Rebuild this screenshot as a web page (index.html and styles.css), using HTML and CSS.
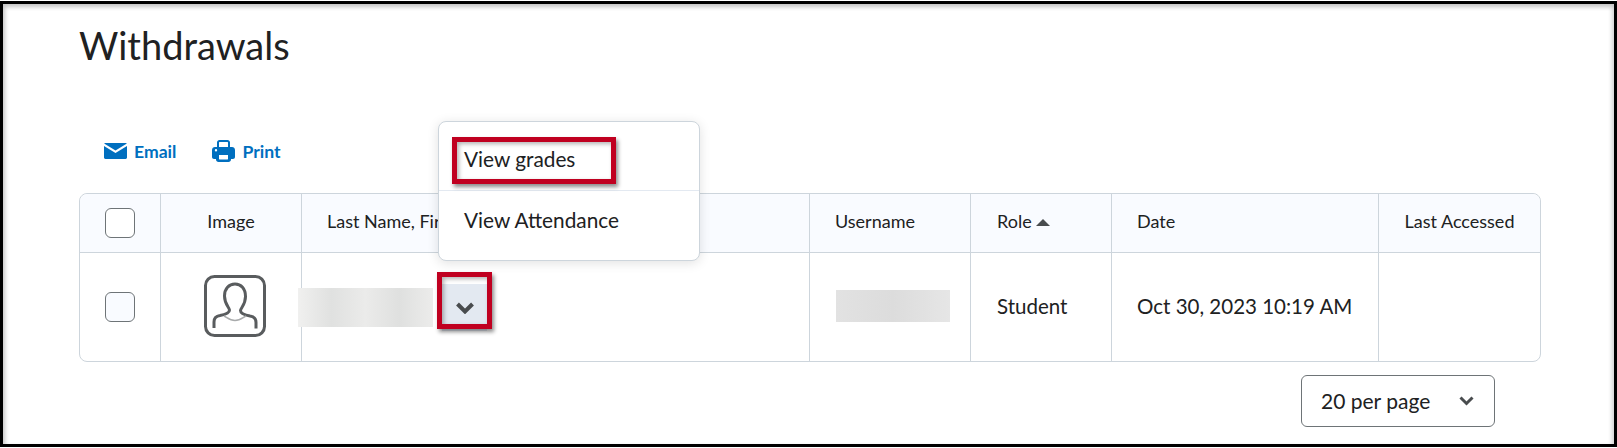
FILE: index.html
```html
<!DOCTYPE html>
<html lang="en">
<head>
<meta charset="utf-8">
<title>Withdrawals</title>
<link rel="stylesheet" href="styles.css">
</head>
<body>
<main class="frame">
  <h1 class="title">Withdrawals</h1>
  <div class="actions">
    <a class="action action-email">
      <svg class="icon-mail" viewBox="0 0 23 16" aria-hidden="true"><path d="M1.2 0h20.6c.5 0 .9.2 1.1.5L11.500 7.600.1.500C.3.2.7 0 1.2 0z"/><path d="M0 3l11.500 7.100L23 3v11.600c0 .8-.6 1.400-1.400 1.400H1.400C.6 16 0 15.400 0 14.600z"/></svg>
      <span>Email</span>
    </a>
    <a class="action action-print">
      <svg class="icon-print" viewBox="0 0 23 22" aria-hidden="true"><path fill-rule="evenodd" d="M5 8V2.500C5 1.100 6.100 0 7.500 0h8C16.900 0 18 1.100 18 2.500V8h-2V2.500c0-.3-.2-.5-.5-.5h-8c-.3 0-.5.2-.5.500V8z"/><path fill-rule="evenodd" d="M3 7h17c1.700 0 3 1.300 3 3v7c0 1.100-.9 2-2 2h-2v.5c0 1.400-1.100 2.500-2.500 2.500h-10C5.100 22 4 20.900 4 19.500V19H2c-1.100 0-2-.9-2-2v-7c0-1.700 1.300-3 3-3zm-.2 3.200a1.200 1.200 0 1 0 2.400 0 1.200 1.200 0 0 0-2.400 0zM7 15v4c0 .3.200.5.500.5h8c.3 0 .5-.2.500-.5v-4z"/></svg>
      <span>Print</span>
    </a>
  </div>
  <div class="table">
    <div class="cell head center head-check"><span class="check"></span></div>
    <div class="cell head center">Image</div>
    <div class="cell head">Last Name, First Name</div>
    <div class="cell head">Username</div>
    <div class="cell head role">Role <svg class="sort" viewBox="0 0 14 7" aria-hidden="true"><path d="M7 0l7 7H0z"/></svg></div>
    <div class="cell head">Date</div>
    <div class="cell head center last">Last Accessed</div>

    <div class="cell body center body-check"><span class="check check-row"></span></div>
    <div class="cell body center">
      <svg class="avatar" viewBox="0 0 62 62" aria-hidden="true"><rect x="1.500" y="1.500" width="59" height="59" rx="9"/><path d="M10 53v-6c0-4 2.500-6 6-6.500 6-1 9.500-2.500 9.500-5.500 0-2.500-5-5.500-5-14C20.500 13.500 25 9 31 9s10.500 4.500 10.500 12.500c0 8.500-5 11.500-5 14 0 3 3.500 4.500 9.500 5.500 3.500.5 6 2.500 6 6.500v6"/><path class="avatar-neck" d="M20 41c3 1.500 6 4.500 11 4.500s8-3 11-4.500"/></svg>
    </div>
    <div class="cell body name"><span class="blur blur-name"></span><span class="chev-btn"><svg class="chev" viewBox="0 0 18 12" aria-hidden="true"><path d="M1.500 2L9 9.500 16.500 2"/></svg></span></div>
    <div class="cell body user"><span class="blur blur-user"></span></div>
    <div class="cell body role-val">Student</div>
    <div class="cell body">Oct 30, 2023 10:19 AM</div>
    <div class="cell body last"></div>
  </div>
  <div class="pager">
    <div class="select"><span>20 per page</span><svg class="select-chev" viewBox="0 0 15 10" aria-hidden="true"><path d="M1.500 1.500L7.500 7.500l6-6"/></svg></div>
  </div>

  <div class="menu">
    <div class="menu-item">View grades</div>
    <div class="menu-item">View Attendance</div>
  </div>
  <div class="mark mark-grades"></div>
  <div class="mark mark-chevron"></div>
</main>
</body>
</html>
```
FILE: styles.css
```css
* { box-sizing: border-box; }
html, body { margin: 0; padding: 0; background: #fff; }
body { width: 1617px; height: 448px; overflow: hidden; font-family: Lato, "Liberation Sans", sans-serif; color: #202122; }
.frame {
  position: relative;
  width: 1617px;
  height: 446px;
  margin-top: 1px;
  border: 3px solid #000;
  box-shadow: inset 3px 4px 4px -1px #c4c4c4, inset -4px 0 4px -2px #d0d0d0;
  padding: 0 0 0 76px;
}
.title { margin: 0; padding-top: 18px; font-size: 38px; line-height: 46px; font-weight: 400; letter-spacing: 0; }
.actions { display: flex; margin-top: 71px; padding-left: 25px; gap: 36px; height: 24px; align-items: center; }
.action { display: flex; align-items: center; color: #006fbf; font-size: 17.600px; font-weight: 700; gap: 7px; }
.icon-mail { width: 23px; height: 16px; fill: #006fbf; }
.icon-print { width: 23px; height: 22px; fill: #006fbf; }
.table {
  display: grid;
  grid-template-columns: 81px 141px 508px 161px 141px 267px 1fr;
  grid-template-rows: 59px 108px;
  width: 1462px;
  margin-top: 30px;
  border: 1px solid #cdd5dc;
  border-radius: 8px;
  font-size: 18px;
}
.cell { display: flex; align-items: center; padding-left: 25px; border-right: 1px solid #cdd5dc; }
.cell.last { border-right: 0; }
.head { background: #f9fbff; border-bottom: 1px solid #cdd5dc; padding-bottom: 5px; }
.head.head-check { border-top-left-radius: 8px; padding-bottom: 0; }
.head.last { border-top-right-radius: 8px; }
.center { justify-content: center; padding-left: 0; }
.body { font-size: 20.500px; padding-bottom: 2px; }
.body.body-check { padding-bottom: 0; }
.check { width: 30px; height: 30px; border: 1px solid #6e7477; border-radius: 6px; background: #fff; }
.check-row { background: #f9fbff; }
.role { gap: 4px; padding-left: 26px; }
.role-val { padding-left: 26px; }
.sort { width: 14px; height: 7px; margin-top: 4px; fill: #494c4e; }
.avatar { width: 62px; height: 62px; margin-left: 8px; fill: none; stroke: #595c5e; stroke-width: 3; }
.avatar-neck { stroke: #a8aaab; stroke-width: 1.500; }
.name { padding-left: 0; position: relative; padding-bottom: 0; }
.user { padding-left: 26px; }
.blur { display: block; background: #e2e3e2; filter: blur(0.5px); }
.blur-name { width: 135px; height: 39px; margin-left: -4px; background: linear-gradient(90deg, #f0f0ef, #e0e1e0 25%, #ebebea 50%, #dfe0df 75%, #ececeb); }
.blur-user { width: 114px; height: 32px; background: linear-gradient(90deg, #e2e2e2, #dcdcdc 50%, #e6e6e6); }
.chev-btn { display: flex; align-items: center; justify-content: center; width: 45px; height: 47px; margin-left: 9px; padding-top: 2px; background: #e3e9f1; }
.chev { width: 18px; height: 12px; fill: none; stroke: #494c4e; stroke-width: 4; }
.pager { display: flex; justify-content: flex-end; width: 1416px; margin-top: 13px; }
.select {
  display: flex; align-items: center; justify-content: space-between;
  width: 194px; height: 52px; padding: 0 20px 2px 19px;
  border: 1px solid #6e7477; border-radius: 6px;
  font-size: 21px;
}
.select-chev { width: 15px; height: 10px; margin-top: 2px; fill: none; stroke: #494c4e; stroke-width: 3; }
.menu {
  position: absolute; left: 435px; top: 117px; width: 262px; height: 140px;
  background: #fff; border: 1px solid #cdd5dc; border-radius: 8px;
  box-shadow: 0 2px 12px rgba(0,0,0,.12);
  font-size: 20.800px;
}
.menu-item { height: 69px; padding: 4px 25px 0; display: flex; align-items: center; }
.menu-item:first-child { border-bottom: 1px solid #e3e9f1; }
.menu-item:last-child { height: 69px; padding: 0 25px 13px; }
.mark { position: absolute; border: 5px solid #c00020; box-shadow: 2px 3px 4px rgba(0,0,0,.45), inset 2px 2px 4px rgba(0,0,0,.3); }
.mark-grades { left: 449px; top: 133px; width: 164px; height: 47px; }
.mark-chevron { left: 434px; top: 268px; width: 55px; height: 57px; }
```
